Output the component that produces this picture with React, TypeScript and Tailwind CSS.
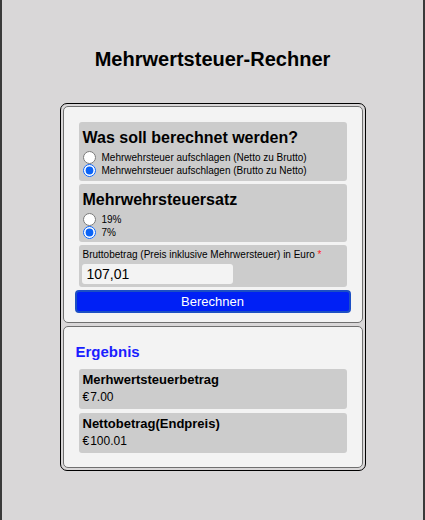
import React, { useState } from 'react';

// Mehrwertsteuer-Rechner: form + result card

const font = { fontFamily: '"Liberation Sans", Arial, Helvetica, sans-serif' };

interface RadioRowProps {
  name: string;
  label: string;
  checked: boolean;
  onChange: () => void;
}

function RadioRow({ name, label, checked, onChange }: RadioRowProps) {
  return (
    <label className="flex h-[13px] items-center gap-[6px] text-[10px] leading-[13px] text-black">
      <input
        type="radio"
        name={name}
        checked={checked}
        onChange={onChange}
        className="m-0 h-[13px] w-[13px] accent-[#0b63f6]"
      />
      <span>{label}</span>
    </label>
  );
}

function ResultItem({ title, value }: { title: string; value: string }) {
  return (
    <div className="rounded-[3px] bg-[#cccccc] px-[4px] pt-[3px] pb-[3px]">
      <div className="text-[13px] font-bold leading-[16px] text-black">{title}</div>
      <div className="text-[12px] leading-[18px] text-black">{value}</div>
    </div>
  );
}

export default function App() {
  const [mode, setMode] = useState<'netto' | 'brutto'>('brutto');
  const [rate, setRate] = useState<19 | 7>(7);
  const [amount, setAmount] = useState('107,01');

  return (
    <div
      className="min-h-screen w-full border-x-2 border-[#3a3a3a] bg-[#d9d7d8] pt-[48px]"
      style={font}
    >
      <h1 className="mb-[32px] text-center text-[20px] font-bold leading-[23px] text-black">
        Mehrwertsteuer-Rechner
      </h1>

      <div className="mx-auto flex w-[306px] flex-col gap-[3px] rounded-[7px] border border-black p-[2px]">
        {/* Form */}
        <div className="rounded-[5px] border border-[#707070] bg-[#f3f3f3] px-[11px] pt-[15px] pb-[9px]">
          <div className="flex flex-col gap-[3px] px-[4px]">
            <div className="rounded-[3px] bg-[#cccccc] px-[4px] pt-[7px] pb-[4px]">
              <h2 className="mb-[4px] text-[16px] font-bold leading-[18px] text-black">
                Was soll berechnet werden?
              </h2>
              <RadioRow
                name="mode"
                label="Mehrwehrsteuer aufschlagen (Netto zu Brutto)"
                checked={mode === 'netto'}
                onChange={() => setMode('netto')}
              />
              <RadioRow
                name="mode"
                label="Mehrwehrsteuer aufschlagen (Brutto zu Netto)"
                checked={mode === 'brutto'}
                onChange={() => setMode('brutto')}
              />
            </div>

            <div className="rounded-[3px] bg-[#cccccc] px-[4px] pt-[7px] pb-[3px]">
              <h2 className="mb-[4px] text-[16px] font-bold leading-[18px] text-black">
                Mehrwehrsteuersatz
              </h2>
              <RadioRow name="rate" label="19%" checked={rate === 19} onChange={() => setRate(19)} />
              <RadioRow name="rate" label="7%" checked={rate === 7} onChange={() => setRate(7)} />
            </div>

            <div className="rounded-[3px] bg-[#cccccc] px-[3px] pt-[4px] pb-[3px]">
              <div className="mb-[3px] px-[1px] text-[10px] leading-[12px] text-black">
                Bruttobetrag (Preis inklusive Mehrwersteuer) in Euro{' '}
                <span className="text-[#ff1a1a]">*</span>
              </div>
              <input
                type="text"
                value={amount}
                onChange={(e) => setAmount(e.target.value)}
                className="block h-[20px] w-[151px] rounded-[3px] bg-[#f3f3f3] px-[5px] text-[14px] leading-[20px] text-black outline-none"
              />
            </div>
          </div>

          <button
            type="button"
            className="mt-[3px] block h-[23px] w-full rounded-[4px] border-2 border-[#1c4fc4] bg-[#0020f5] text-[13px] leading-[19px] text-white"
          >
            Berechnen
          </button>
        </div>

        {/* Result */}
        <div className="rounded-[5px] border border-[#707070] bg-[#f3f3f3] px-[12px] pt-[16px] pb-[14px]">
          <h2 className="mb-[8px] text-[15px] font-bold leading-[18px] text-[#1a1eff]">Ergebnis</h2>
          <div className="flex flex-col gap-[4px] px-[3px]">
            <ResultItem title="Merhwertsteuerbetrag" value={'€\u200a7.00'} />
            <ResultItem title="Nettobetrag(Endpreis)" value={'€\u200a100.01'} />
          </div>
        </div>
      </div>
    </div>
  );
}
